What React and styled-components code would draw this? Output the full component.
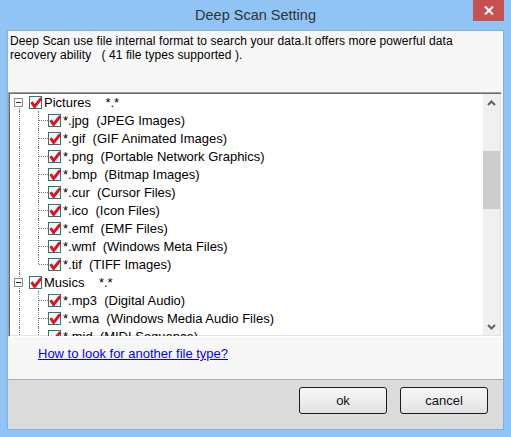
import React from 'react';
import styled, { createGlobalStyle } from 'styled-components';

const Global = createGlobalStyle`
  html, body { margin: 0; padding: 0; }
  body {
    width: 511px; height: 437px; overflow: hidden;
    font-family: "Liberation Sans", Arial, sans-serif;
  }
`;

const Window = styled.div`
  width: 511px;
  height: 437px;
  box-sizing: border-box;
  background: #8fc4f5;
  padding: 0 7px 7px 7px;
  display: flex;
  flex-direction: column;
`;

const TitleBar = styled.div`
  position: relative;
  height: 30px;
  flex: 0 0 30px;
  display: flex;
  align-items: center;
  justify-content: center;
  font-size: 14.5px;
  color: #333;
  padding-bottom: 1px;
  box-sizing: border-box;
`;

const CloseButton = styled.div`
  position: absolute;
  top: 0;
  right: 0;
  width: 31px;
  height: 21px;
  background: #c75050;
  display: flex;
  align-items: center;
  justify-content: center;
`;

const Content = styled.div`
  flex: 1;
  display: flex;
  flex-direction: column;
  background: #f7f7f7;
  border: 1px solid #7fb0de;
  min-height: 0;
`;

const Description = styled.div`
  height: 61px;
  box-sizing: border-box;
  padding: 3px 2px 0 2px;
  font-size: 12px;
  letter-spacing: 0.08px;
  line-height: 14px;
  color: #000;
`;

const TreeBox = styled.div`
  height: 245px;
  flex: 0 0 245px;
  box-sizing: border-box;
  margin-right: 1px;
  display: flex;
  background: #fff;
  border: 1px solid;
  border-color: #a0a0a0 #ffffff #ffffff #a0a0a0;
  box-shadow: inset 1px 1px 0 #696969, inset -1px -1px 0 #e3e3e3;
`;

const TreeList = styled.div`
  flex: 1;
  overflow: hidden;
  font-size: 13px;
  color: #000;
`;

const Row = styled.div`
  height: 18px;
  display: flex;
  align-items: center;
  white-space: nowrap;
`;

const LineCell = styled.div`
  position: relative;
  width: ${p => p.$w}px;
  height: 18px;
  flex: 0 0 ${p => p.$w}px;
  display: flex;
  align-items: center;
  justify-content: center;
  &::before {
    content: '';
    display: ${p => (p.$v ? 'block' : 'none')};
    position: absolute;
    left: ${p => p.$x}px;
    top: ${p => (p.$v === 'bottom' ? '9px' : '0')};
    height: ${p => (p.$v === 'top' ? '9px' : p.$v === 'bottom' ? '9px' : '18px')};
    border-left: 1px dotted #7a7a7a;
  }
  &::after {
    content: '';
    display: ${p => (p.$h ? 'block' : 'none')};
    position: absolute;
    left: ${p => p.$x + 1}px;
    right: 0;
    top: 9px;
    border-top: 1px dotted #7a7a7a;
  }
`;

const Expander = styled.div`
  position: relative;
  z-index: 1;
  width: 9px;
  height: 9px;
  box-sizing: border-box;
  border: 1px solid #8e8f8f;
  background: #fff;
  margin-left: -1px;
  display: flex;
  align-items: center;
  justify-content: center;
  &::after {
    content: '';
    width: 5px;
    height: 1px;
    background: #222;
  }
`;

const CheckBox = styled.div`
  width: 13px;
  height: 13px;
  flex: 0 0 13px;
  box-sizing: border-box;
  border: 1px solid #237a78;
  background: #fff;
  position: relative;
  svg { position: absolute; left: -1px; top: -1px; overflow: visible; }
`;

const Label = styled.span`
  margin-left: 2px;
  white-space: pre;
`;

const ScrollBar = styled.div`
  width: 17px;
  flex: 0 0 17px;
  margin: 1px 1px 1px 0;
  background: #f0f0f0;
  display: flex;
  flex-direction: column;
`;

const ScrollButton = styled.div`
  height: 17px;
  flex: 0 0 17px;
  display: flex;
  align-items: center;
  justify-content: center;
`;

const Track = styled.div`
  flex: 1;
  display: flex;
  flex-direction: column;
`;

const Thumb = styled.div`
  margin-top: ${p => p.$offset}px;
  height: ${p => p.$size}px;
  background: #cdcdcd;
`;

const LinkArea = styled.div`
  height: 42px;
  flex: 0 0 42px;
  box-sizing: border-box;
  padding: 9px 0 0 30px;
  font-size: 13px;
  line-height: 15px;
`;

const HelpLink = styled.a`
  color: #0000ff;
  text-decoration: underline;
  cursor: pointer;
`;

const Footer = styled.div`
  flex: 1;
  border-top: 1px solid #adadad;
  background: #dbdbdb;
  display: flex;
  justify-content: flex-end;
  align-items: flex-start;
  padding: 7px 15px 0 0;
  gap: 13px;
`;

const Button = styled.button`
  width: 88px;
  height: 27px;
  border: 1px solid #1c1c1c;
  border-radius: 3px;
  background: linear-gradient(to bottom, #f7f7f7 0%, #ececec 55%, #e0e0e6 100%);
  font-family: "Liberation Sans", Arial, sans-serif;
  font-size: 13px;
  color: #111;
  padding: 0;
`;

const Check = () => (
  <CheckBox>
    <svg width="13" height="13" viewBox="0 0 13 13">
      <polyline points="2.5,6.2 5.6,10.5 12.3,2.1" fill="none" stroke="#e3101d" strokeWidth="2.9" strokeLinejoin="miter" />
    </svg>
  </CheckBox>
);

const Chevron = ({ up }) => (
  <svg width="9" height="6" viewBox="0 0 9 6">
    <polyline
      points={up ? '1,5 4.5,1.5 8,5' : '1,1 4.5,4.5 8,1'}
      fill="none"
      stroke="#606060"
      strokeWidth="2"
    />
  </svg>
);

const groups = [
  {
    name: 'Pictures',
    first: true,
    items: [
      '*.jpg  (JPEG Images)',
      '*.gif  (GIF Animated Images)',
      '*.png  (Portable Network Graphics)',
      '*.bmp  (Bitmap Images)',
      '*.cur  (Cursor Files)',
      '*.ico  (Icon Files)',
      '*.emf  (EMF Files)',
      '*.wmf  (Windows Meta Files)',
      '*.tif  (TIFF Images)',
    ],
  },
  {
    name: 'Musics',
    items: [
      '*.mp3  (Digital Audio)',
      '*.wma  (Windows Media Audio Files)',
      '*.mid  (MIDI Sequence)',
    ],
    more: true,
  },
];

export default function App() {
  return (
    <>
      <Global />
      <Window>
        <TitleBar>
          Deep Scan Setting
          <CloseButton>
            <svg width="10" height="9" viewBox="0 0 10 9">
              <path d="M1 0.5 L9 8.5 M9 0.5 L1 8.5" stroke="#fff" strokeWidth="2" />
            </svg>
          </CloseButton>
        </TitleBar>
        <Content>
          <Description>
            Deep Scan use file internal format to search your data.It offers more powerful data
            <br />
            recovery ability &nbsp;&nbsp;( 41 file types supported ).
          </Description>
          <TreeBox>
            <TreeList>
              {groups.map(g => (
                <React.Fragment key={g.name}>
                  <Row>
                    <LineCell $w={20} $x={10} $v={g.first ? 'bottom' : 'full'}>
                      <Expander />
                    </LineCell>
                    <Check />
                    <Label>{g.name + '    *.*'}</Label>
                  </Row>
                  {g.items.map((it, i) => (
                    <Row key={it}>
                      <LineCell $w={20} $x={10} $v="full" />
                      <LineCell
                        $w={19}
                        $x={9}
                        $v={i === g.items.length - 1 && !g.more ? 'top' : 'full'}
                        $h
                      />
                      <Check />
                      <Label>{it}</Label>
                    </Row>
                  ))}
                </React.Fragment>
              ))}
            </TreeList>
            <ScrollBar>
              <ScrollButton><Chevron up /></ScrollButton>
              <Track>
                <Thumb $offset={40} $size={58} />
              </Track>
              <ScrollButton><Chevron /></ScrollButton>
            </ScrollBar>
          </TreeBox>
          <LinkArea>
            <HelpLink>How to look for another file type?</HelpLink>
          </LinkArea>
          <Footer>
            <Button>ok</Button>
            <Button>cancel</Button>
          </Footer>
        </Content>
      </Window>
    </>
  );
}
